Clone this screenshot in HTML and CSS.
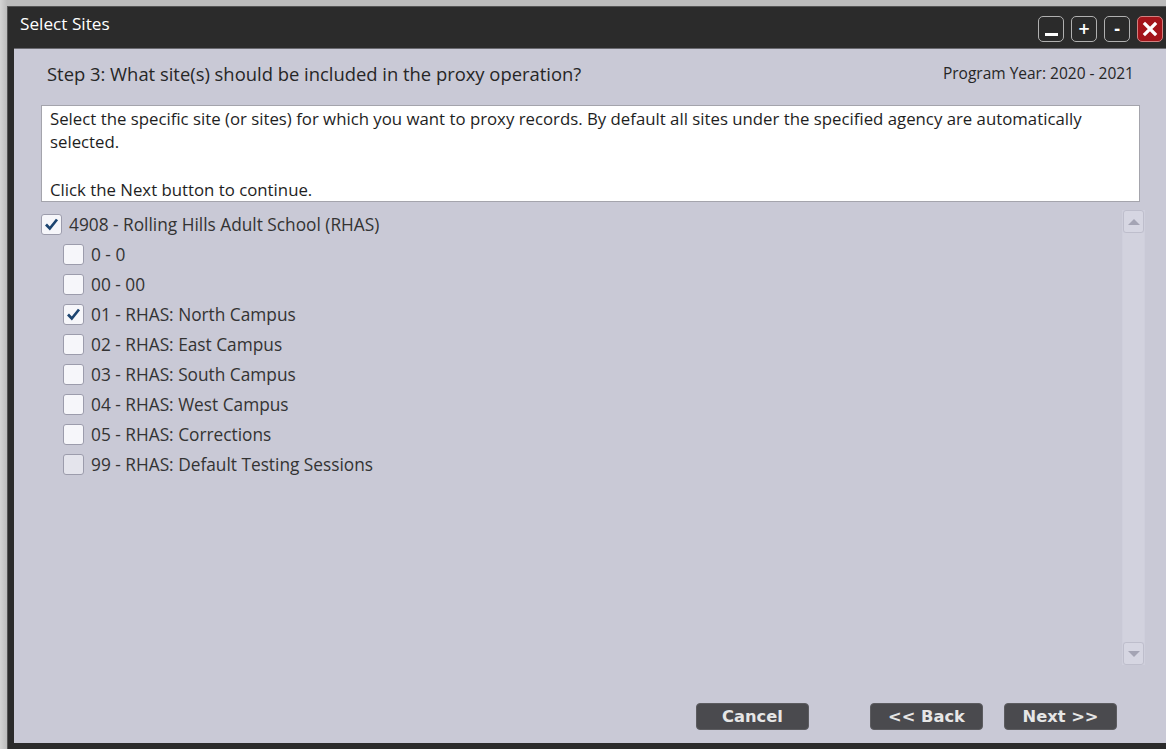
FILE: index.html
```html
<!DOCTYPE html>
<html lang="en">
<head>
<meta charset="utf-8">
<title>Select Sites</title>
<link rel="stylesheet" href="styles.css">
</head>
<body>
<div class="frame">
  <div class="titlebar">
    <span class="title">Select Sites</span>
    <div class="win-buttons">
      <button class="win-btn"><span class="bar-low"></span></button>
      <button class="win-btn">+</button>
      <button class="win-btn">-</button>
      <button class="win-btn close">
        <svg width="16" height="16" viewBox="0 0 16 16"><path d="M3 3 L13 13 M13 3 L3 13" stroke="#fff" stroke-width="3.2" stroke-linecap="square"/></svg>
      </button>
    </div>
  </div>
  <div class="content">
    <div class="step-row">
      <span class="step">Step 3: What site(s) should be included in the proxy operation?</span>
      <span class="year">Program Year: 2020 - 2021</span>
    </div>
    <div class="info">
      <p>Select the specific site (or sites) for which you want to proxy records. By default all sites under the specified agency are automatically selected.</p>
      <p class="gap">Click the Next button to continue.</p>
    </div>
    <div class="tree-area">
      <ul class="tree">
        <li class="node root"><span class="cb"><svg class="tick" width="21" height="21" viewBox="0 0 21 21"><path d="M5 10.5 L8.8 14.5 L16 5.5" fill="none" stroke="#1c4470" stroke-width="2.7"/></svg></span>4908 - Rolling Hills Adult School (RHAS)</li>
        <li class="node child"><span class="cb"></span>0 - 0</li>
        <li class="node child"><span class="cb"></span>00 - 00</li>
        <li class="node child"><span class="cb"><svg class="tick" width="21" height="21" viewBox="0 0 21 21"><path d="M5 10.5 L8.8 14.5 L16 5.5" fill="none" stroke="#1c4470" stroke-width="2.7"/></svg></span>01 - RHAS: North Campus</li>
        <li class="node child"><span class="cb"></span>02 - RHAS: East Campus</li>
        <li class="node child"><span class="cb"></span>03 - RHAS: South Campus</li>
        <li class="node child"><span class="cb"></span>04 - RHAS: West Campus</li>
        <li class="node child"><span class="cb"></span>05 - RHAS: Corrections</li>
        <li class="node child"><span class="cb dim"></span>99 - RHAS: Default Testing Sessions</li>
      </ul>
      <div class="scrollbar">
        <div class="sb-btn"><span class="tri up"></span></div>
        <div class="sb-track"></div>
        <div class="sb-btn"><span class="tri down"></span></div>
      </div>
    </div>
    <div class="footer">
      <button class="btn">Cancel</button>
      <button class="btn back">&lt;&lt; Back</button>
      <button class="btn next">Next &gt;&gt;</button>
    </div>
  </div>
</div>
</body>
</html>
```
FILE: styles.css
```css
html, body {
  margin: 0;
  height: 100%;
  overflow: hidden;
}
body {
  background: linear-gradient(90deg, #d4d4d4, #bcbcbc 7px);
  font-family: "Open Sans", "Noto Sans", sans-serif;
}
.frame {
  margin: 6px 0 0 7px;
  height: 743px;
  box-sizing: border-box;
  background: #2b2b2b;
  border-left: 1px solid #555;
  border-top: 1px solid #555;
  padding: 0 0 6px 6px;
  display: flex;
  flex-direction: column;
}
.titlebar {
  height: 41px;
  display: flex;
  align-items: flex-start;
  justify-content: space-between;
  border-bottom: 1px solid #6a6a70;
}
.title {
  color: #fff;
  font-size: 17.2px;
  line-height: 20px;
  padding: 7px 0 0 6px;
}
.win-buttons {
  display: flex;
  gap: 7px;
  padding: 9px 3px 0 0;
}
.win-btn {
  width: 26px;
  height: 26px;
  box-sizing: border-box;
  border: 1.5px solid #b0b0b0;
  border-radius: 5px;
  background: #2b2b2b;
  color: #fff;
  font: bold 15px/1 "DejaVu Sans", sans-serif;
  padding: 0;
  display: flex;
  align-items: center;
  justify-content: center;
}
.bar-low {
  width: 13px;
  height: 3px;
  background: #fff;
  margin-top: 10px;
}
.win-btn.close {
  background: #a3141a;
  border-color: #d08080;
}
.content {
  flex: 1;
  background: #c9c9d6;
  display: flex;
  flex-direction: column;
  color: #2f2f2f;
}
.step-row {
  display: flex;
  justify-content: space-between;
  align-items: center;
  padding: 13px 32px 0 33px;
  height: 24px;
  margin-bottom: 19px;
}
.step {
  font-size: 18.4px;
  line-height: 24px;
  color: #262626;
}
.year {
  font-size: 15.5px;
  line-height: 20px;
  color: #262626;
  margin-top: -3px;
}
.info {
  margin: 0 26px 0 27px;
  height: 97px;
  box-sizing: border-box;
  background: #fff;
  border: 1px solid #a4a4ac;
  padding: 1px 8px;
  font-size: 16.8px;
  line-height: 23px;
  color: #1e1e1e;
}
.info p {
  margin: 0;
}
.info p.gap {
  margin-top: 25px;
}
.tree-area {
  height: 455px;
  margin-top: 8px;
  display: flex;
  justify-content: space-between;
}
.tree {
  list-style: none;
  margin: -1px 0 0 0;
  padding: 0 0 0 27px;
}
.node {
  height: 30px;
  display: flex;
  align-items: center;
  font-size: 17.3px;
  color: #333;
}
.node.child {
  padding-left: 22px;
}
.cb {
  width: 21px;
  height: 21px;
  box-sizing: border-box;
  border: 1px solid #9c9cac;
  border-radius: 3px;
  background: #f6f6fa;
  margin-right: 7px;
  position: relative;
  flex: none;
}
.cb.dim {
  background: #e4e4ec;
}
.tick {
  position: absolute;
  left: -1px;
  top: -1px;
}
.scrollbar {
  width: 23px;
  margin-right: 21px;
  display: flex;
  flex-direction: column;
  background: #cfcfdc;
}
.sb-btn {
  height: 23px;
  box-sizing: border-box;
  border: 1px solid #bebecc;
  border-radius: 3px;
  background: #d6d6e2;
  margin: 0 1px;
  display: flex;
  align-items: center;
  justify-content: center;
}
.sb-track {
  flex: 1;
  background: #d2d2de;
  margin: 0 1px;
}
.tri {
  width: 0;
  height: 0;
  border-left: 6px solid transparent;
  border-right: 6px solid transparent;
}
.tri.up {
  border-bottom: 6px solid #a4a4b4;
}
.tri.down {
  border-top: 6px solid #a4a4b4;
}
.footer {
  display: flex;
  justify-content: flex-end;
  padding: 38px 49px 0 0;
}
.btn {
  width: 113px;
  height: 27px;
  box-sizing: border-box;
  background: #4a4a4e;
  border: 1px solid #5c5c60;
  border-radius: 4px;
  color: #e6e6e6;
  font: bold 16.3px/1 "DejaVu Sans", "Liberation Sans", sans-serif;
  padding: 1px 0 0;
}
.btn.back {
  margin-left: 61px;
}
.btn.next {
  margin-left: 21px;
}
```
